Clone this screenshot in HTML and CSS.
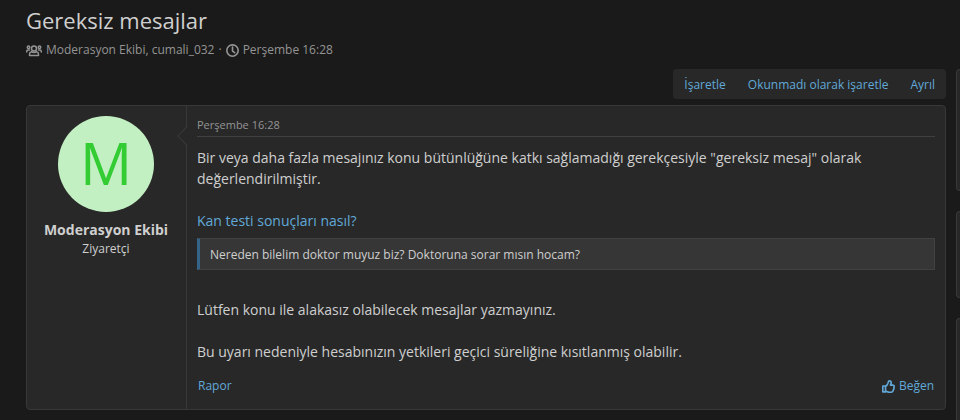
FILE: index.html
```html
<!DOCTYPE html>
<html lang="tr">
<head>
<meta charset="utf-8">
<meta name="viewport" content="width=device-width, initial-scale=1">
<title>Gereksiz mesajlar</title>
<link rel="stylesheet" href="styles.css">
</head>
<body>
<div class="page">
  <header class="page-header">
    <h1 class="page-title">Gereksiz mesajlar</h1>
    <div class="page-meta">
      <svg class="icon icon-users" viewBox="0 0 32 24" aria-hidden="true"><circle cx="16" cy="8" r="5"/><path d="M11 14.500C8.500 15 7 17 7 19.500V22h18v-2.500c0-2.500-1.500-4.500-4-5-3 1.700-7 1.700-10 0z"/><circle cx="5" cy="5.500" r="2.500"/><circle cx="27" cy="5.500" r="2.500"/><path d="M1.500 15v-1.500C1.500 12 2.500 11 4 11h3M30.500 15v-1.500c0-1.500-1-2.500-2.500-2.500h-3"/></svg>
      <span>Moderasyon Ekibi, cumali_032</span>
      <span>·</span>
      <svg class="icon icon-clock" viewBox="0 0 24 24" aria-hidden="true"><circle cx="12" cy="12" r="10.500"/><path d="M12 5.500V13l4 3"/></svg>
      <time>Perşembe 16:28</time>
    </div>
  </header>
  <div class="layout">
    <main class="main">
      <div class="toolbar">
        <a href="#">İşaretle</a>
        <a href="#">Okunmadı olarak işaretle</a>
        <a href="#">Ayrıl</a>
      </div>
      <article class="message">
        <div class="message-user">
          <div class="avatar">M</div>
          <h2 class="user-name">Moderasyon Ekibi</h2>
          <div class="user-title">Ziyaretçi</div>
        </div>
        <div class="message-main">
          <div class="message-date"><time>Perşembe 16:28</time></div>
          <div class="message-body">
            <p>Bir veya daha fazla mesajınız konu bütünlüğüne katkı sağlamadığı gerekçesiyle "gereksiz mesaj" olarak değerlendirilmiştir.</p>
            <p class="topic"><a href="#">Kan testi sonuçları nasıl?</a></p>
            <blockquote>Nereden bilelim doktor muyuz biz? Doktoruna sorar mısın hocam?</blockquote>
            <p>Lütfen konu ile alakasız olabilecek mesajlar yazmayınız.</p>
            <p>Bu uyarı nedeniyle hesabınızın yetkileri geçici süreliğine kısıtlanmış olabilir.</p>
          </div>
          <footer class="message-actions">
            <a href="#">Rapor</a>
            <a class="like" href="#"><svg class="icon icon-like" viewBox="0 0 24 24" aria-hidden="true"><path d="M1.500 11h5v11h-5zM6.500 12c3-2 4-4.500 4.500-6 .5-1.700.5-4.500 2.500-4.500 2.500 0 3.500 1.500 3.500 3.500S15.500 8.500 15.500 9.500H20c3 0 3.300 3.500 1.600 4.500 1 1.500.6 3.200-.8 4 .4 1.500-.3 2.500-1.300 2.700 0 1.300-1 1.800-2.500 1.800h-3c-3 0-4.500-1.500-7.500-2"/></svg>Beğen</a>
          </footer>
        </div>
      </article>
    </main>
    <aside class="sidebar">
      <div class="block block-tall"></div>
      <div class="block"></div>
      <div class="block block-tall"></div>
    </aside>
  </div>
</div>
</body>
</html>
```
FILE: styles.css
```css
* {
  box-sizing: border-box;
}

body {
  margin: 0;
  background: #1a1a1a;
  color: #cfcfcf;
  font-family: "Segoe UI", "Open Sans", "Noto Sans", sans-serif;
  font-size: 14px;
  line-height: 21px;
  overflow: hidden;
}

h1, h2, p, blockquote {
  margin: 0;
}

a {
  color: #61a8d8;
  text-decoration: none;
}

.page {
  padding: 4px 0 0 26px;
}

.page-title {
  font-size: 22px;
  line-height: 32px;
  font-weight: 400;
}

.page-meta {
  display: flex;
  align-items: center;
  gap: 4px;
  margin-top: 5px;
  color: #949494;
  font-size: 12px;
  line-height: 18px;
}

.icon {
  flex: none;
  height: 13px;
  fill: none;
  stroke: currentColor;
  stroke-width: 3;
  stroke-linejoin: round;
  stroke-linecap: round;
  overflow: visible;
}

.icon-users {
  width: 16px;
}

.icon-clock,
.icon-like {
  width: 13px;
}

.layout {
  display: flex;
  gap: 10px;
  margin-top: 10px;
}

.main {
  flex: 1;
  min-width: 0;
}

.toolbar {
  display: flex;
  gap: 22px;
  width: fit-content;
  margin-left: auto;
  padding: 7px 11px 5px;
  border-radius: 4px;
  background: #282828;
  font-size: 12px;
  line-height: 18px;
}

.message {
  display: flex;
  margin-top: 6px;
  border: 1px solid #383838;
  border-radius: 4px;
  background: #282828;
}

.message-user {
  flex: 0 0 160px;
  padding: 10px 11px 10px 10px;
  border-right: 1px solid #383838;
  text-align: center;
}

.avatar {
  width: 96px;
  height: 96px;
  margin: 0 auto 7px;
  border-radius: 50%;
  background: #c2f0c2;
  color: #33cc33;
  font-size: 58px;
  font-weight: 500;
  line-height: 94px;
}

.user-name {
  font-size: 14px;
  line-height: 21px;
  font-weight: 700;
  white-space: nowrap;
}

.user-title {
  font-size: 12px;
  line-height: 18px;
}

.message-main {
  position: relative;
  flex: 1;
  min-width: 0;
  padding: 10px;
}

.message-main::before {
  content: "";
  position: absolute;
  top: 23px;
  left: -7px;
  width: 13px;
  height: 13px;
  border: solid #383838;
  border-width: 0 0 1px 1px;
  background: linear-gradient(45deg, #282828 52%, transparent 52%);
  transform: rotate(45deg);
}

.message-date {
  padding-bottom: 2px;
  border-bottom: 1px solid #414141;
  color: #949494;
  font-size: 11px;
  line-height: 18px;
}

.message-body {
  padding-top: 10px;
}

.message-body p {
  margin-bottom: 21px;
}

.message-body .topic {
  margin-bottom: 7px;
}

blockquote {
  margin-bottom: 29px;
  padding: 7px 10px 5px;
  border: 1px solid #414141;
  border-left: 3px solid #346488;
  background: #363636;
  font-size: 12px;
  line-height: 18px;
}

.message-actions {
  display: flex;
  justify-content: space-between;
  margin-top: -6px;
  padding: 0 1px 4px;
  font-size: 12px;
  line-height: 18px;
}

.like {
  display: flex;
  align-items: center;
  gap: 4px;
}

.sidebar {
  display: flex;
  flex: 0 0 4px;
  flex-direction: column;
  gap: 20px;
}

.block {
  flex: none;
  height: 87px;
  border: 1px solid #383838;
  border-right: 0;
  border-radius: 4px 0 0 4px;
  background: #282828;
}

.block-tall {
  height: 122px;
}
```
